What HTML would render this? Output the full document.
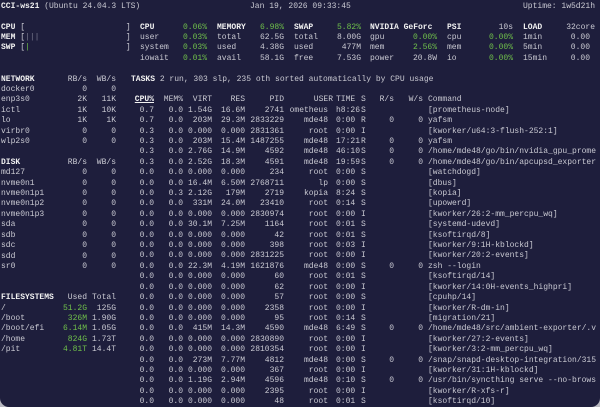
<!DOCTYPE html>
<html><head><meta charset="utf-8"><style>
*{margin:0;padding:0;box-sizing:border-box}
html,body{width:600px;height:407px;background:#b8b8c0;overflow:hidden}
#w{position:absolute;left:0;top:0;width:600px;height:407px;background:#1e1e3c;border-radius:0 0 9px 9px;overflow:hidden;font-family:"Liberation Mono",monospace;font-size:8px;line-height:10.4px;color:#c9c9d2}
#w div{position:absolute;white-space:pre}
.r{text-align:right}
b{color:#f2f2f2;font-weight:bold}
.g{color:#6fc04a}
.d{color:#7a7a8e}
u{text-decoration:underline}
</style></head><body><div id="w">
<div style="left:1px;top:1.8px"><b>CCI-ws21</b> (Ubuntu 24.04.3 LTS)</div>
<div style="left:250px;top:1.8px">Jan 19, 2026 09:33:45</div>
<div class="r" style="right:5px;top:1.8px">Uptime: 1w5d21h</div>

<div style="left:1px;top:22.6px"><b>CPU</b> [                     ]
<b>MEM</b> [<span class="d">|||</span>                  ]
<b>SWP</b> [<span class="g">|</span>                    ]</div>
<div style="left:140px;top:22.6px"><b>CPU</b>
user
system
iowait</div>
<div class="r" style="right:393px;top:22.6px"><span class="g">0.06%</span>
<span class="g">0.03%</span>
<span class="g">0.03%</span>
<span class="g">0.01%</span></div>
<div style="left:217px;top:22.6px"><b>MEMORY</b>
total
used
avail</div>
<div class="r" style="right:316px;top:22.6px"><span class="g">6.98%</span>
62.5G
4.38G
58.1G</div>
<div style="left:294px;top:22.6px"><b>SWAP</b>
total
used
free</div>
<div class="r" style="right:239px;top:22.6px"><span class="g">5.82%</span>
8.00G
477M
7.53G</div>
<div style="left:370px;top:22.6px"><b>NVIDIA GeForc</b>
gpu
mem
power</div>
<div class="r" style="right:163px;top:22.6px">
<span class="g">0.00%</span>
<span class="g">2.56%</span>
20.8W</div>
<div style="left:447px;top:22.6px"><b>PSI</b>
cpu
mem
io</div>
<div class="r" style="right:87px;top:22.6px">10s
<span class="g">0.00%</span>
<span class="g">0.00%</span>
<span class="g">0.00%</span></div>
<div style="left:523px;top:22.6px"><b>LOAD</b>
1min
5min
15min</div>
<div class="r" style="right:5px;top:22.6px">32core</div>
<div class="r" style="right:10px;top:33px">0.00
0.00
0.00</div>

<div style="left:1px;top:74.6px"><b>NETWORK</b>
docker0
enp3s0
ictl
lo
virbr0
wlp2s0

<b>DISK</b>
md127
nvme0n1
nvme0n1p1
nvme0n1p2
nvme0n1p3
sda
sdb
sdc
sdd
sr0


<b>FILESYSTEMS</b>
/
/boot
/boot/efi
/home
/pit</div>
<div class="r" style="right:513px;top:74.6px">RB/s
0
2K
1K
1K
0
0

RB/s
0
0
0
0
0
0
0
0
0
0


Used
<span class="g">51.2G</span>
<span class="g">326M</span>
<span class="g">6.14M</span>
<span class="g">824G</span>
<span class="g">4.81T</span></div>
<div class="r" style="right:484px;top:74.6px">WB/s
0
11K
10K
1K
0
0

WB/s
0
0
0
0
0
0
0
0
0
0


Total
125G
1.90G
1.05G
1.73T
14.4T</div>

<div style="left:131px;top:74.6px"><b>TASKS</b> 2 run, 303 slp, 235 oth sorted automatically by CPU usage</div>

<div class="r" style="right:446px;top:95.4px"><b><u>CPU%</u></b>
0.7
0.7
0.3
0.3
0.3
0.3
0.0
0.0
0.0
0.0
0.0
0.0
0.0
0.0
0.0
0.0
0.0
0.0
0.0
0.0
0.0
0.0
0.0
0.0
0.0
0.0
0.0
0.0
0.0</div>
<div class="r" style="right:417px;top:95.4px">MEM%
0.0
0.0
0.0
0.0
0.0
0.0
0.0
0.0
0.3
0.0
0.0
0.0
0.0
0.0
0.0
0.0
0.0
0.0
0.0
0.0
0.0
0.0
0.0
0.0
0.0
0.0
0.0
0.0
0.0</div>
<div class="r" style="right:388px;top:95.4px">VIRT
1.54G
203M
0.000
203M
2.76G
2.52G
0.000
16.4M
2.12G
331M
0.000
30.1M
0.000
0.000
0.000
22.3M
0.000
0.000
0.000
0.000
0.000
415M
0.000
0.000
273M
0.000
1.19G
0.000
0.000</div>
<div class="r" style="right:355px;top:95.4px">RES
16.6M
29.3M
0.000
15.4M
14.9M
18.3M
0.000
6.50M
179M
24.0M
0.000
7.25M
0.000
0.000
0.000
4.19M
0.000
0.000
0.000
0.000
0.000
14.3M
0.000
0.000
7.77M
0.000
2.94M
0.000
0.000</div>
<div class="r" style="right:316px;top:95.4px">PID
2741
2833229
2831361
1487255
4592
4591
234
2768711
2719
23410
2830974
1164
42
398
2831225
1621876
60
62
57
2358
95
4590
2830890
2810354
4812
367
4596
2395
48</div>
<div class="r" style="right:267px;top:95.4px">USER</div>
<div class="r" style="right:272px;top:105.8px">ometheus
mde48
root
mde48
mde48
mde48
root
lp
kopia
root
root
root
root
root
root
mde48
root
root
root
root
root
mde48
root
root
mde48
root
mde48
root
root</div>
<div style="left:336px;top:95.4px">TIME
h8:26
0:00
0:00
17:21
46:10
19:59
0:00
0:00
8:24
0:14
0:00
0:01
0:01
0:03
0:00
0:00
0:01
0:00
0:00
0:00
0:14
6:49
0:00
0:00
0:00
0:00
0:10
0:00
0:01</div>
<div style="left:361px;top:95.4px">S
S
R
I
R
S
S
S
S
S
S
I
S
S
I
I
S
S
I
S
I
S
S
I
I
S
I
S
I
S</div>
<div class="r" style="right:206px;top:95.4px">R/s

0

0
0
0









0





0


0

0

</div>
<div class="r" style="right:177px;top:95.4px">W/s

0

0
0
0









0





0


0

0

</div>
<div style="left:428px;top:95.4px">Command
[prometheus-node]
yafsm
[kworker/u64:3-flush-252:1]
yafsm
/home/mde48/go/bin/nvidia_gpu_prome
/home/mde48/go/bin/apcupsd_exporter
[watchdogd]
[dbus]
[kopia]
[upowerd]
[kworker/26:2-mm_percpu_wq]
[systemd-udevd]
[ksoftirqd/8]
[kworker/9:1H-kblockd]
[kworker/20:2-events]
zsh --login
[ksoftirqd/14]
[kworker/14:0H-events_highpri]
[cpuhp/14]
[kworker/R-dm-in]
[migration/21]
/home/mde48/src/ambient-exporter/.v
[kworker/27:2-events]
[kworker/3:2-mm_percpu_wq]
/snap/snapd-desktop-integration/315
[kworker/31:1H-kblockd]
/usr/bin/syncthing serve --no-brows
[kworker/R-xfs-r]
[ksoftirqd/10]</div>
</div></body></html>
